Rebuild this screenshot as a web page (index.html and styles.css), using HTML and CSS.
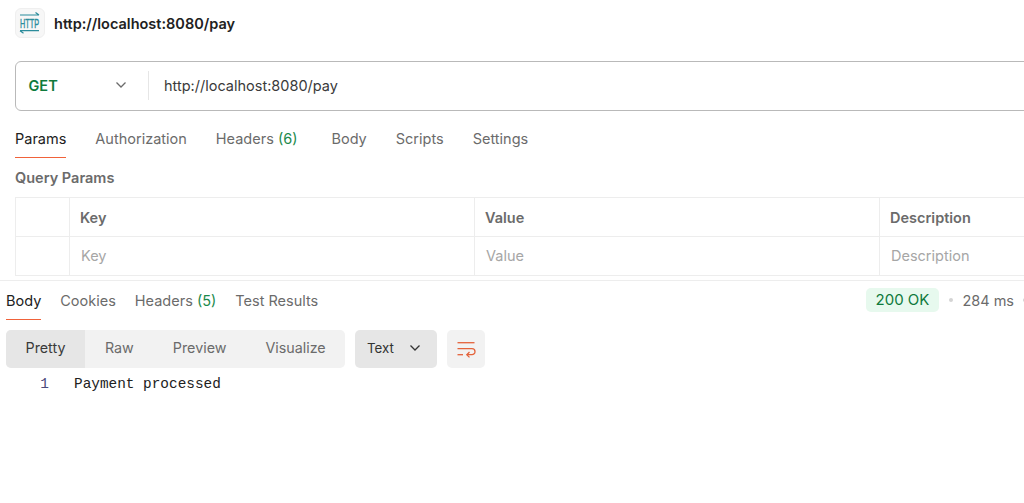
FILE: index.html
```html
<!DOCTYPE html>
<html lang="en">
<head>
<meta charset="utf-8">
<title>http://localhost:8080/pay</title>
<link rel="stylesheet" href="styles.css">
</head>
<body>
<div class="page">
  <header class="title-row">
    <div class="http-icon">
      <svg width="30" height="30" viewBox="0 0 30 30" fill="none" stroke="#2b8c9b" stroke-width="1.200">
        <path d="M5 7H24M20.500 4.500 24 7"/>
        <path d="M5 22.700H24M8.500 25.200 5 22.700"/>
        <text transform="translate(5 20) scale(.583 1)" class="http-text">HTTP</text>
      </svg>
    </div>
    <h1 class="title">http://localhost:8080/pay</h1>
  </header>

  <div class="url-bar">
    <div class="method">
      <span class="method-name">GET</span>
      <svg class="chev" width="12" height="8" viewBox="0 0 12 8" fill="none" stroke="#6b6b6b" stroke-width="1.3"><path d="M1.500 1.500 6 6l4.500-4.500"/></svg>
    </div>
    <div class="url">http://localhost:8080/pay</div>
  </div>

  <nav class="req-tabs">
    <span class="tab active">Params</span>
    <span class="tab">Authorization</span>
    <span class="tab tab-wide">Headers <em class="count">(6)</em></span>
    <span class="tab">Body</span>
    <span class="tab">Scripts</span>
    <span class="tab">Settings</span>
  </nav>

  <div class="section-label">Query Params</div>

  <div class="params">
    <div class="cell first"></div>
    <div class="cell head">Key</div>
    <div class="cell head">Value</div>
    <div class="cell head last">Description</div>
    <div class="cell first bottom"></div>
    <div class="cell ph bottom">Key</div>
    <div class="cell ph bottom">Value</div>
    <div class="cell ph bottom last">Description</div>
  </div>

  <section class="response">
    <div class="res-head">
      <nav class="res-tabs">
        <span class="tab active">Body</span>
        <span class="tab">Cookies</span>
        <span class="tab">Headers <em class="count">(5)</em></span>
        <span class="tab">Test Results</span>
      </nav>
      <div class="status">
        <span class="status-badge">200 OK</span>
        <span class="dot"></span>
        <span class="time">284 ms</span>
        <span class="dot dot-end"></span>
      </div>
    </div>
    <div class="toolbar">
      <div class="views">
        <span class="view selected">Pretty</span>
        <span class="view">Raw</span>
        <span class="view">Preview</span>
        <span class="view">Visualize</span>
      </div>
      <div class="format">
        <span>Text</span>
        <svg width="12" height="8" viewBox="0 0 12 8" fill="none" stroke="#333" stroke-width="1.3"><path d="M1.500 1.500 6 6l4.500-4.500"/></svg>
      </div>
      <div class="wrap-btn">
        <svg width="20" height="18" viewBox="0 0 20 18" fill="none" stroke="#e4633b" stroke-width="1.300">
          <path d="M1.500 2.700H18.500"/>
          <path d="M1.500 8.700H16a2.800 2.800 0 0 1 0 6H11"/>
          <path d="M13.500 12 10.800 14.700l2.700 2.700"/>
          <path d="M1.500 14.700H7"/>
        </svg>
      </div>
    </div>
    <div class="code">
      <span class="line-no">1</span>
      <span class="line">Payment processed</span>
    </div>
  </section>
</div>
</body>
</html>
```
FILE: styles.css
```css
* { box-sizing: border-box; }
html, body { margin: 0; height: 100%; background: #fff; overflow: hidden; }
body { font-family: Inter, "Liberation Sans", sans-serif; font-size: 14.5px; color: #6b6b6b; }
.page { width: 1024px; height: 503px; overflow: hidden; }

.title-row { display: flex; align-items: center; gap: 9px; height: 46px; padding-left: 15px; }
.http-icon { width: 30px; height: 30px; background: #f7f7f7; border: 1px solid #efefef; border-radius: 6px; display: flex; }
.http-icon svg { margin: -1px; }
.http-text { font-family: "Liberation Sans", sans-serif; font-size: 12.5px; fill: #2b8c9b; stroke: #2b8c9b; stroke-width: .4; }
.title { margin: 0; font-size: 14.5px; font-weight: 600; color: #212121; }

.url-bar { display: flex; align-items: center; width: 1100px; height: 50px; margin: 15px 0 0 15px; padding-bottom: 2px; border: 1px solid #b9b9b9; border-radius: 6px; }
.method { display: flex; align-items: center; justify-content: space-between; width: 133px; height: 29px; padding: 0 21px 0 12.500px; border-right: 1px solid #e6e6e6; }
.method-name { font-weight: 600; color: #0f7a3c; }
.url { padding-left: 15px; color: #3a3a3a; }

.req-tabs { display: flex; gap: 29px; margin: 0 0 0 15px; height: 46px; padding-top: 19px; }
.tab { display: block; height: 28px; white-space: nowrap; }
.tab.active { color: #212121; border-bottom: 1px solid #f0623a; }
.tab-wide { margin-right: 5px; }
.count { font-style: normal; color: #1c8a4c; }

.section-label { margin: 11px 0 0 15px; height: 20px; line-height: 20px; font-weight: 600; }

.params { display: grid; grid-template-columns: 54px 405px 405px 300px; width: 1164px; margin: 9px 0 0 15px; border-top: 1px solid #ededed; border-left: 1px solid #ededed; }
.cell { height: 39px; padding: 0 10px; line-height: 38px; border-right: 1px solid #ededed; border-bottom: 1px solid #ededed; }
.head { font-weight: 600; line-height: 40px; }
.ph { color: #a6a6a6; padding-left: 11px; }

.response { margin-top: 4px; border-top: 1px solid #ededed; }
.res-head { display: flex; justify-content: space-between; padding: 0 0 0 6px; height: 39px; }
.res-tabs { display: flex; gap: 19px; padding-top: 11px; }
.status { display: flex; align-items: center; gap: 9px; height: 38px; margin-right: -3px; }
.status-badge { background: #e7f9ee; color: #0f7a3c; border-radius: 5px; padding: 0 10px; height: 24px; line-height: 24px; font-size: 15px; }
.dot { flex: none; width: 4px; height: 4px; margin: 0 0 0 1px; border-radius: 50%; background: #d4d4d4; }
.dot-end { margin: 0; }

.toolbar { display: flex; gap: 10px; margin: 10px 0 0 6px; height: 38px; }
.views { display: flex; width: 339px; background: #f2f2f2; border-radius: 5px; overflow: hidden; line-height: 36px; font-size: 14.3px; }
.view { padding: 0 19.500px; white-space: nowrap; }
.view.selected { padding-right: 20px; background: #e6e6e6; color: #3a3a3a; }
.format { display: flex; align-items: center; justify-content: space-between; width: 82px; padding: 0 16px 2px 12px; background: #e6e6e6; border-radius: 5px; color: #333; font-size: 13.300px; }
.wrap-btn { display: flex; align-items: center; justify-content: center; width: 38px; background: #f2f2f2; border-radius: 5px; }

.code { display: flex; margin-top: 7px; font-family: "Liberation Mono", "DejaVu Sans Mono", monospace; font-size: 14.400px; line-height: 18px; color: #212121; }
.line-no { width: 49px; text-align: right; color: #4a4a7a; }
.line { margin-left: 25px; }
```
